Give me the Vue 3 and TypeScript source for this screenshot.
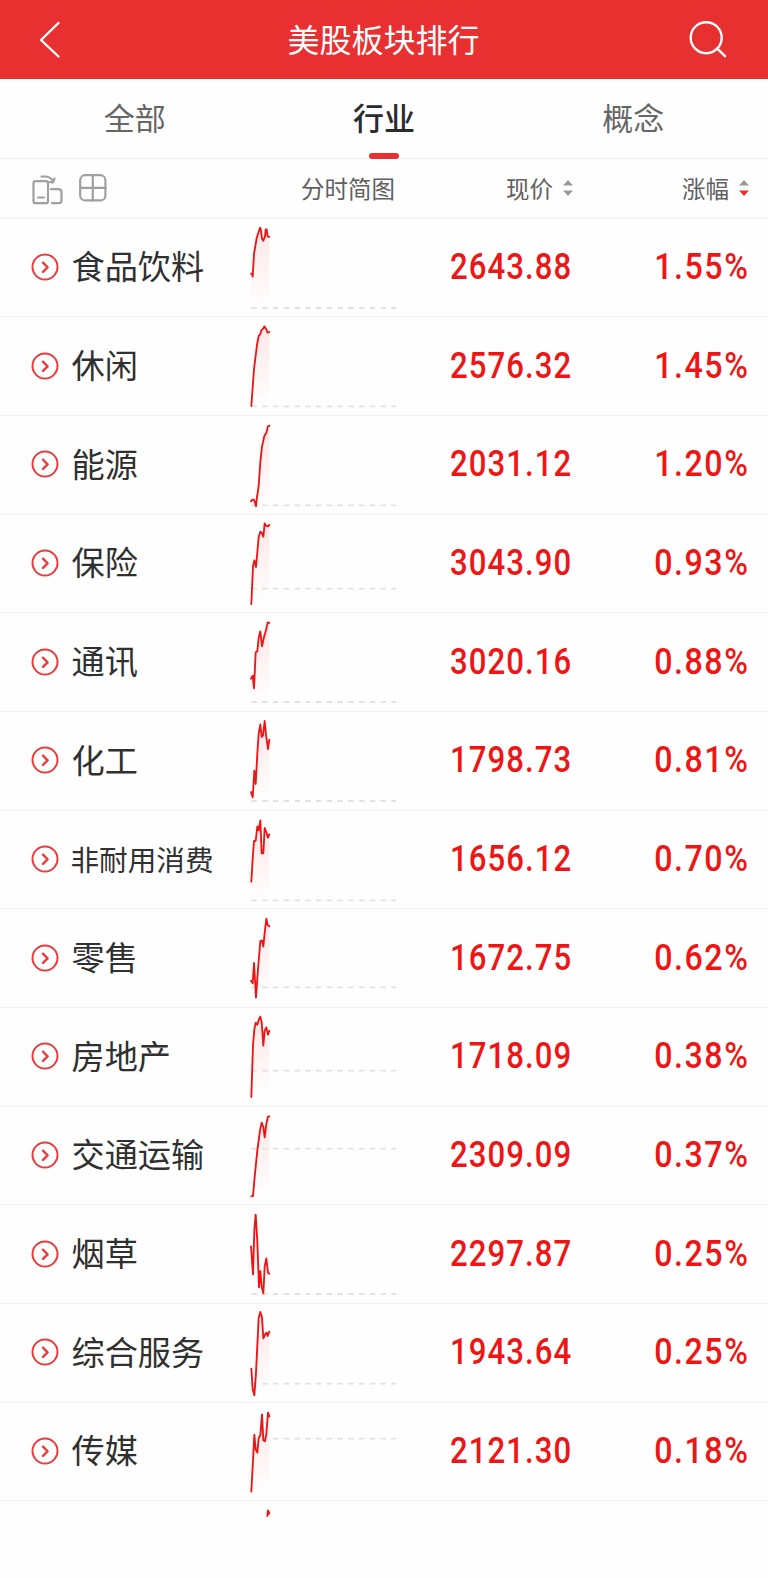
<script setup lang="ts">
interface Sector {
  name: string
  price: string
  change: string
  base: number
  points: string
}

const sectors: Sector[] = [
  { name: '食品饮料', price: '2643.88', change: '1.55%', base: 267, points: '33,164 36,164 38,173 42,105 50,57 60,26 62,30 66,59 70,65 75,52 77,31 80,31 83,52 88,54' },
  { name: '休闲', price: '2576.32', change: '1.45%', base: 268, points: '34,267 42,156 51,84 56,57 60,53 65,38 70,35 73,28 79,37 83,47 88,45' },
  { name: '能源', price: '2031.12', change: '1.20%', base: 268, points: '33,256 37,251 42,252 45,260 48,271 50,250 56,210 61,138 66,92 73,60 79,50 84,31 88,29' },
  { name: '保险', price: '3043.90', change: '0.93%', base: 221, points: '34,267 39,154 43,136 48,156 56,66 61,50 65,53 70,65 74,25 78,32 84,34 88,30' },
  { name: '通讯', price: '3020.16', change: '0.88%', base: 267, points: '33,197 38,188 42,226 47,118 52,115 56,75 61,55 66,100 72,72 78,52 83,28 88,30' },
  { name: '化工', price: '1798.73', change: '0.81%', base: 267, points: '33,240 38,256 43,176 47,216 52,125 56,65 61,37 65,75 69,70 74,27 78,68 84,111 88,83' },
  { name: '非耐用消费', price: '1656.12', change: '0.70%', base: 268, points: '34,212 38,142 42,90 47,90 52,46 56,58 61,28 65,127 70,127 74,51 80,66 84,80 88,70' },
  { name: '零售', price: '1672.75', change: '0.62%', base: 235, points: '33,215 38,223 42,162 48,266 54,180 61,96 66,94 70,113 74,72 79,29 83,48 88,52' },
  { name: '房地产', price: '1718.09', change: '0.38%', base: 188, points: '34,267 39,110 43,65 47,44 52,50 57,33 61,26 65,42 70,113 74,68 79,58 84,80 88,68' },
  { name: '交通运输', price: '2309.09', change: '0.37%', base: 125, points: '34,268 39,267 44,210 52,130 60,70 65,47 70,60 74,91 79,50 84,29 88,28' },
  { name: '烟草', price: '2297.87', change: '0.25%', base: 267, points: '33,124 39,208 43,75 47,29 52,110 57,247 61,198 65,245 70,265 74,185 79,160 84,203 88,206' },
  { name: '综合服务', price: '1943.64', change: '0.25%', base: 239, points: '34,194 38,255 43,274 48,205 56,42 61,24 66,40 70,103 76,90 80,86 83,96 88,83' },
  { name: '传媒', price: '2121.30', change: '0.18%', base: 107, points: '34,266 43,95 47,140 52,149 56,105 61,97 66,34 70,112 75,115 79,92 84,29 88,40' },
]
</script>

<template>
  <div class="page">
    <header class="bar">
      <svg class="back" viewBox="0 0 24 40"><path d="M21.500 3 4 20l17.500 16.500" /></svg>
      <h1>美股板块排行</h1>
      <svg class="search" viewBox="0 0 40 40"><circle cx="17.200" cy="17.700" r="15.500" /><path d="m28.300 28.700 7.700 7.500" /></svg>
    </header>

    <nav class="tabs">
      <a><span>全部</span></a>
      <a class="active"><span>行业</span></a>
      <a><span>概念</span></a>
    </nav>

    <div class="row head">
      <div class="tools">
        <svg class="rotate" viewBox="0 0 32 30">
          <rect x="1.500" y="6.200" width="14.500" height="22" rx="2" />
          <path d="M6 22.500h6M9.500 1.500h3.500q5 0 7.500 4M16.500 7l4.500 0.500 1.500-4M19 14.200h7.500q3 0 3 3v8q0 3-3 3H20" />
        </svg>
        <svg class="cells" viewBox="0 0 28 28">
          <rect x="1.200" y="1.200" width="25.200" height="25.200" rx="5" />
          <path d="M13.800 1v25.600M1 13.800h25.600" />
        </svg>
      </div>
      <span class="trend">分时简图</span>
      <span class="sort">现价<svg viewBox="0 0 10 18"><path d="M0 6.500 5 1l5 5.500zM0 11.500h10L5 17z" /></svg></span>
      <span class="sort">涨幅<svg viewBox="0 0 10 18"><path d="M0 6.500 5 1l5 5.500z" /><path class="on" d="M0 11.500h10L5 17z" /></svg></span>
    </div>

    <svg class="defs" width="0" height="0">
      <defs>
        <linearGradient id="fade" x1="0" y1="0" x2="0" y2="1">
          <stop offset="0" stop-color="#f01818" stop-opacity="0.1" />
          <stop offset="1" stop-color="#f01818" stop-opacity="0" />
        </linearGradient>
      </defs>
    </svg>

    <div v-for="s in sectors" :key="s.name" class="row">
      <div class="name" :class="{ small: s.name.length > 4 }">
        <svg viewBox="0 0 28 28"><circle cx="14" cy="14" r="12.500" /><path class="chev" d="m12 9.700 4.600 4.600-4.600 4.600" /></svg>
        <span>{{ s.name }}</span>
      </div>
      <svg class="chart" viewBox="0 0 510 296">
        <polygon :points="`34,267 ${s.points} 88,267`" fill="url(#fade)" />
        <line x1="34" :y1="s.base" x2="468" :y2="s.base" />
        <polyline :points="s.points" />
      </svg>
      <span class="num"><b>{{ s.price }}</b></span>
      <span class="num pct"><b>{{ s.change }}</b></span>
    </div>

    <div class="row next">
      <div></div>
      <svg class="chart" viewBox="0 0 510 296"><polyline points="82,45 84,28 88,36 82,43" /></svg>
    </div>
  </div>
</template>

<style>
body { margin: 0; background: #fefefe; }
</style>

<style scoped>
.page {
  width: 768px;
  height: 1578px;
  overflow: hidden;
  background: #fefefe;
  color: #303030;
  font-family: "Noto Sans CJK SC", sans-serif;
}
svg { display: block; fill: none; stroke-linecap: round; stroke-linejoin: round; }
.bar {
  box-sizing: border-box;
  height: 79px;
  padding: 0 39px 0 37px;
  display: grid;
  grid-template-columns: 40px 1fr 40px;
  align-items: center;
  background: #e83030;
  color: #fff;
}
.bar svg { stroke: #fff; stroke-width: 2.4; }
.back { width: 24px; height: 40px; }
.search { width: 40px; height: 40px; }
h1 { margin: 0; padding: 0 0 4px 1px; font-size: 32px; line-height: 46px; font-weight: 400; text-align: center; }
.tabs {
  box-sizing: border-box;
  height: 80px;
  padding: 0 10px;
  display: grid;
  grid-template-columns: repeat(3, 1fr);
  border-bottom: 1px solid #ededed;
}
.tabs a {
  display: flex;
  flex-direction: column;
  align-items: center;
  font-size: 31px;
  line-height: 76px;
  color: #666;
}
.tabs .active { font-weight: 500; color: #2b2b2b; }
.active::after { content: ""; width: 30px; height: 5.500px; margin-top: -2px; border-radius: 3px; background: #e83030; }
.row {
  box-sizing: border-box;
  height: 98.680px;
  display: grid;
  grid-template-columns: 240px 170px 162px 176px;
  align-items: center;
  border-bottom: 1px solid #f1f1f1;
}
.head {
  height: 59.600px;
  border-bottom: 2px solid #f5f5f5;
  font-size: 23.500px;
  line-height: 34px;
  color: #606060;
}
.tools { display: flex; align-items: center; gap: 15px; padding-left: 32px; }
.tools svg { stroke: #a0a0a0; stroke-width: 2.200; }
.rotate { width: 32px; height: 30px; margin-top: 4px; }
.cells { width: 28px; height: 28px; margin-top: 1px; }
.trend { justify-self: end; padding: 1px 15px 0 0; }
.sort { display: flex; align-items: center; justify-content: flex-end; gap: 10px; padding-top: 1px; margin-right: -1px; }
.sort svg { width: 10px; height: 18px; fill: #999; }
.sort .on { fill: #e83030; }
.name {
  display: flex;
  align-items: center;
  gap: 12.500px;
  padding: 0 0 2px 31px;
  font-size: 33.200px;
  line-height: 48px;
  white-space: nowrap;
}
.name span { padding-bottom: 3px; }
.name svg { width: 28px; height: 28px; flex: none; stroke: #ea3c3c; stroke-width: 2; }
.name .chev { stroke-width: 2.400; }
.name.small { font-size: 28.600px; }
.name.small span { margin-left: -1px; padding-bottom: 0; }
.chart { width: 170px; height: 98.680px; }
.chart line { stroke: #e2e2e2; stroke-width: 5.500; stroke-dasharray: 16.500 15.800; stroke-linecap: butt; }
.chart polyline { stroke: #ec1414; stroke-width: 5.500; }
.num { display: flex; justify-content: flex-end; padding-bottom: 2px; }
.num b {
  font: 500 36px/42px Roboto, "Liberation Sans", sans-serif;
  letter-spacing: 1.200px;
  margin-right: -0.500px;
  color: #ee1515;
  transform: scaleX(0.865);
  transform-origin: right;
}
.num.pct b { letter-spacing: 1.700px; margin-right: -1.800px; transform: scaleX(0.895); }
.next { border: 0; }
</style>
